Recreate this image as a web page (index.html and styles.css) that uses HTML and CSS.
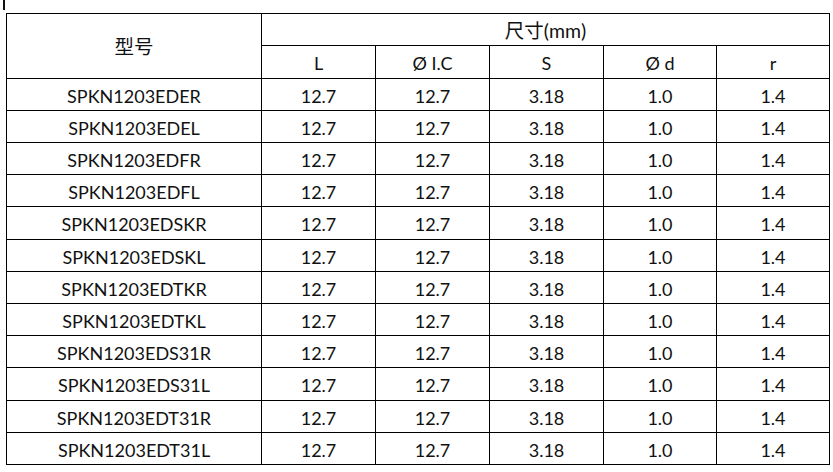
FILE: index.html
```html
<!DOCTYPE html>
<html lang="zh">
<head>
<meta charset="utf-8">
<title>SPKN1203 尺寸</title>
<link rel="stylesheet" href="styles.css">
</head>
<body>
<div class="mark"></div>
<table class="spec">
  <colgroup>
    <col class="c-model">
    <col class="c-val">
    <col class="c-val">
    <col class="c-val">
    <col class="c-val2">
    <col class="c-val2">
  </colgroup>
  <thead>
    <tr class="h1">
      <th rowspan="2" class="cjk">型号</th>
      <th colspan="5" class="cjk">尺寸(mm)</th>
    </tr>
    <tr class="h2">
      <th>L</th>
      <th>Ø I.C</th>
      <th>S</th>
      <th>Ø d</th>
      <th>r</th>
    </tr>
  </thead>
  <tbody>
    <tr><td>SPKN1203EDER</td><td>12.7</td><td>12.7</td><td>3.18</td><td>1.0</td><td>1.4</td></tr>
    <tr><td>SPKN1203EDEL</td><td>12.7</td><td>12.7</td><td>3.18</td><td>1.0</td><td>1.4</td></tr>
    <tr><td>SPKN1203EDFR</td><td>12.7</td><td>12.7</td><td>3.18</td><td>1.0</td><td>1.4</td></tr>
    <tr><td>SPKN1203EDFL</td><td>12.7</td><td>12.7</td><td>3.18</td><td>1.0</td><td>1.4</td></tr>
    <tr class="tall"><td>SPKN1203EDSKR</td><td>12.7</td><td>12.7</td><td>3.18</td><td>1.0</td><td>1.4</td></tr>
    <tr><td>SPKN1203EDSKL</td><td>12.7</td><td>12.7</td><td>3.18</td><td>1.0</td><td>1.4</td></tr>
    <tr><td>SPKN1203EDTKR</td><td>12.7</td><td>12.7</td><td>3.18</td><td>1.0</td><td>1.4</td></tr>
    <tr><td>SPKN1203EDTKL</td><td>12.7</td><td>12.7</td><td>3.18</td><td>1.0</td><td>1.4</td></tr>
    <tr><td>SPKN1203EDS31R</td><td>12.7</td><td>12.7</td><td>3.18</td><td>1.0</td><td>1.4</td></tr>
    <tr class="tall"><td>SPKN1203EDS31L</td><td>12.7</td><td>12.7</td><td>3.18</td><td>1.0</td><td>1.4</td></tr>
    <tr><td>SPKN1203EDT31R</td><td>12.7</td><td>12.7</td><td>3.18</td><td>1.0</td><td>1.4</td></tr>
    <tr><td>SPKN1203EDT31L</td><td>12.7</td><td>12.7</td><td>3.18</td><td>1.0</td><td>1.4</td></tr>
  </tbody>
</table>
</body>
</html>
```

FILE: styles.css
```css
html, body {
  margin: 0;
  padding: 0;
  background: #ffffff;
}

body {
  font-family: Lato, "Noto Sans CJK SC", sans-serif;
  color: #111111;
}

.mark {
  width: 2px;
  height: 10px;
  margin-left: 3px;
  background: #111111;
}

.spec {
  margin: 3px 0 0 6px;
  border-collapse: collapse;
  table-layout: fixed;
  width: 823px;
}

.c-model { width: 255px; }
.c-val { width: 114px; }
.c-val2 { width: 113px; }

.spec th,
.spec td {
  border: 1px solid #000000;
  padding: 2px 0 0 0;
  text-align: center;
  vertical-align: middle;
  font-size: 18px;
  font-weight: 400;
  line-height: 20px;
  white-space: nowrap;
}

.spec .cjk {
  font-size: 19.5px;
}

.h1 { height: 32px; }
.h2 { height: 33px; }
.spec tbody tr { height: 32px; }
.spec tbody tr.tall { height: 33px; }
```
